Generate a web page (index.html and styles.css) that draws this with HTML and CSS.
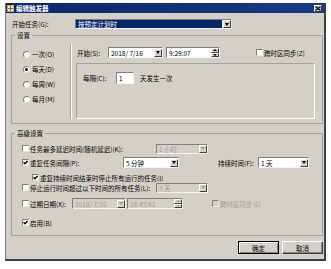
FILE: index.html
```html
<!DOCTYPE html>
<html lang="zh-CN">
<head>
  <meta charset="UTF-8">
  <title>编辑触发器</title>
  <link rel="stylesheet" href="styles.css">
</head>
<body>
  <div class="window">
    <div class="titlebar">
      <svg class="app-icon" width="7" height="7" viewBox="0 0 7 7">
        <rect x="0" y="0" width="7" height="7" fill="#f0a030"/>
        <rect x="1" y="1" width="5" height="5" fill="#fff3c0"/>
        <rect x="1" y="3" width="5" height="1" fill="#3a6cc8"/>
        <rect x="3" y="1" width="1" height="5" fill="#3a6cc8"/>
      </svg>
      <span class="title">编辑触发器</span>
      <span class="close-btn">
        <svg width="6" height="5" viewBox="0 0 6 5"><path d="M0.5 0.5 L5.5 4.5 M5.5 0.5 L0.5 4.5" stroke="#000" stroke-width="1.2"/></svg>
      </span>
    </div>

    <div class="content">
      <div class="task-row">
        <span class="task-label">开始任务(G):</span>
        <div class="combo combo-task">
          <span class="combo-selected">按预定计划时</span>
          <span class="drop-btn"></span>
        </div>
      </div>

      <fieldset class="group group-settings">
        <legend>设置</legend>
        <div class="schedule">
          <div class="freq-list">
            <div class="radio-item"><span class="radio"></span>一次(O)</div>
            <div class="radio-item"><span class="radio radio-on"></span>每天(D)</div>
            <div class="radio-item"><span class="radio"></span>每周(W)</div>
            <div class="radio-item"><span class="radio"></span>每月(M)</div>
          </div>
          <div class="divider"></div>
          <div class="schedule-detail">
            <div class="start-row">
              <span class="start-label">开始(S):</span>
              <div class="field date-field">2018/ 7/16<span class="drop-btn"></span></div>
              <div class="field time-field">9:29:07<span class="spin"><span class="spin-up"></span><span class="spin-down"></span></span></div>
              <div class="check-item tz-item"><span class="check"></span>跨时区同步(Z)</div>
            </div>
            <div class="recur-box">
              <span class="every-label">每隔(C):</span>
              <div class="field every-field">1</div>
              <span class="every-unit">天发生一次</span>
            </div>
          </div>
        </div>
      </fieldset>

      <fieldset class="group group-advanced">
        <legend>高级设置</legend>
        <div class="adv-row row-delay">
          <span class="check"></span>
          <span class="adv-label label-wide">任务最多延迟时间(随机延迟)(K):</span>
          <div class="combo combo-disabled combo-small">1 小时<span class="drop-btn"></span></div>
        </div>
        <div class="adv-row row-repeat">
          <span class="check check-on"></span>
          <span class="adv-label label-repeat">重复任务间隔(P):</span>
          <div class="combo combo-interval">5 分钟<span class="drop-btn"></span></div>
          <span class="duration-label">持续时间(F):</span>
          <div class="combo combo-duration">1 天<span class="drop-btn"></span></div>
        </div>
        <div class="adv-row row-stop-all">
          <span class="check check-on"></span>
          <span class="adv-label">重复持续时间结束时停止所有运行的任务(I)</span>
        </div>
        <div class="adv-row row-timeout">
          <span class="check"></span>
          <span class="adv-label label-wide">停止运行时间超过以下时间的所有任务(L):</span>
          <div class="combo combo-disabled combo-small">3 天<span class="drop-btn"></span></div>
        </div>
        <div class="adv-row row-expire">
          <span class="check"></span>
          <span class="adv-label label-expire">过期日期(X):</span>
          <div class="field field-disabled expire-date">2018/ 7/20<span class="drop-btn"></span></div>
          <div class="field field-disabled expire-time">14:45:41<span class="spin"><span class="spin-up"></span><span class="spin-down"></span></span></div>
          <div class="check-item check-disabled expire-tz"><span class="check"></span>跨时区同步(E)</div>
        </div>
        <div class="adv-row row-enable">
          <span class="check check-on"></span>
          <span class="adv-label">启用(B)</span>
        </div>
      </fieldset>

      <div class="buttons">
        <button class="btn btn-default">确定</button>
        <button class="btn">取消</button>
      </div>
    </div>
  </div>
</body>
</html>
```

FILE: styles.css
```css
* {
  box-sizing: border-box;
}

body {
  margin: 0;
  background: #fff;
  font-family: "Noto Sans CJK SC", "Noto Sans", sans-serif;
  font-size: 6.5px;
  line-height: 8px;
  color: #000;
}

.window {
  margin: 3px 0 0 5px;
  width: 321px;
  height: 258px;
  background: #d4d0c8;
  border-left: 1px solid #808080;
  border-right: 2px solid #404040;
  border-bottom: 2px solid #404040;
  display: flex;
  flex-direction: column;
}

/* title bar */
.titlebar {
  height: 10px;
  background: linear-gradient(90deg, #0a246a, #1c3a84);
  display: flex;
  align-items: center;
  padding: 0 2px 0 1px;
  color: #fff;
}

.app-icon {
  flex: none;
}

.title {
  margin-left: 2px;
  font-weight: bold;
}

.close-btn {
  margin-left: auto;
  width: 8px;
  height: 7px;
  background: #d4d0c8;
  border-top: 1px solid #fff;
  border-left: 1px solid #fff;
  border-right: 1px solid #404040;
  border-bottom: 1px solid #404040;
  display: flex;
  align-items: center;
  justify-content: center;
}

/* content */
.content {
  flex: 1;
  padding: 6px 1px 0 5px;
}

.task-row {
  display: flex;
  align-items: center;
  height: 10px;
}

.task-label {
  width: 64px;
  padding-left: 1px;
}

/* combo boxes and fields */
.combo,
.field {
  display: flex;
  align-items: center;
  background: #fff;
  border-top: 1px solid #808080;
  border-left: 1px solid #808080;
  border-right: 1px solid #f4f4f4;
  border-bottom: 1px solid #f4f4f4;
  padding-left: 2px;
  white-space: nowrap;
}

.combo-task {
  width: 157px;
  height: 10px;
  padding-left: 0;
}

.combo-selected {
  flex: 1;
  height: 8px;
  background: #0a246a;
  color: #fff;
  padding-left: 2px;
  margin-right: 1px;
}

.drop-btn {
  flex: none;
  margin-left: auto;
  width: 8px;
  height: 8px;
  background: #d4d0c8;
  border-top: 1px solid #fff;
  border-left: 1px solid #fff;
  border-right: 1px solid #404040;
  border-bottom: 1px solid #404040;
  display: flex;
  align-items: center;
  justify-content: center;
}

.drop-btn::after {
  content: "";
  border-top: 3px solid #000;
  border-left: 2.5px solid transparent;
  border-right: 2.5px solid transparent;
}

.spin {
  flex: none;
  margin-left: auto;
  width: 8px;
  height: 9px;
  display: flex;
  flex-direction: column;
}

.spin-up,
.spin-down {
  flex: 1;
  background: #d4d0c8;
  border-top: 1px solid #fff;
  border-left: 1px solid #fff;
  border-right: 1px solid #404040;
  border-bottom: 1px solid #404040;
  display: flex;
  align-items: center;
  justify-content: center;
}

.spin-up::after {
  content: "";
  border-bottom: 2px solid #000;
  border-left: 2px solid transparent;
  border-right: 2px solid transparent;
}

.spin-down::after {
  content: "";
  border-top: 2px solid #000;
  border-left: 2px solid transparent;
  border-right: 2px solid transparent;
}

.combo-disabled,
.field-disabled {
  background: #d4d0c8;
  color: #a09d96;
}

.combo-disabled .drop-btn::after,
.field-disabled .drop-btn::after,
.field-disabled .spin-up::after,
.field-disabled .spin-down::after {
  border-top-color: #a09d96;
  border-bottom-color: #a09d96;
}

/* group boxes */
.group {
  margin: 0;
  padding: 0;
  border: 1px solid #a6a39c;
  min-width: 0;
}

.group legend {
  margin-left: 3px;
  padding: 0 2px;
  line-height: 8px;
}

.group-settings {
  margin-top: 2px;
  padding: 5px 0 4px;
}

.schedule {
  display: flex;
  height: 75px;
}

.freq-list {
  width: 58px;
  padding: 6px 0 0 11px;
}

.radio-item,
.check-item {
  display: flex;
  align-items: center;
  height: 8px;
  white-space: nowrap;
}

.radio-item {
  margin-bottom: 7px;
}

.radio {
  width: 7px;
  height: 7px;
  margin-right: 2px;
  border-radius: 50%;
  background: #fff;
  border: 1px solid #808080;
  border-right-color: #e8e8e8;
  border-bottom-color: #e8e8e8;
  display: flex;
  align-items: center;
  justify-content: center;
}

.radio-on::after {
  content: "";
  width: 3px;
  height: 3px;
  border-radius: 50%;
  background: #000;
}

.check {
  flex: none;
  width: 7px;
  height: 7px;
  margin-right: 1px;
  background: #fff;
  border-top: 1px solid #808080;
  border-left: 1px solid #808080;
  border-right: 1px solid #e8e8e8;
  border-bottom: 1px solid #e8e8e8;
}

.check-on {
  background: #fff url("data:image/svg+xml;utf8,<svg xmlns='http://www.w3.org/2000/svg' width='5' height='5'><path d='M0.5 2.2 L2 3.7 L4.6 0.9' fill='none' stroke='black' stroke-width='1.3'/></svg>") no-repeat center;
}

.check-disabled {
  color: #a09d96;
}

.check-disabled .check {
  background: #d4d0c8;
}

.divider {
  width: 2px;
  border-left: 1px solid #a6a39c;
  border-right: 1px solid #fff;
}

.schedule-detail {
  margin-left: 4px;
  width: 239px;
}

.start-row {
  display: flex;
  align-items: center;
  margin-top: 3px;
  height: 11px;
}

.start-label {
  width: 32px;
  padding-left: 1px;
}

.date-field {
  width: 55px;
  height: 11px;
  margin-right: 3px;
}

.time-field {
  width: 54px;
  height: 11px;
}

.tz-item {
  margin-left: 36px;
}

.recur-box {
  margin-top: 5px;
  height: 56px;
  border-top: 1px solid #a6a39c;
  border-left: 1px solid #a6a39c;
  border-right: 1px solid #fff;
  border-bottom: 1px solid #fff;
  padding: 8px 0 0 6px;
  display: flex;
  align-items: flex-start;
}

.every-label {
  width: 33px;
  line-height: 12px;
}

.every-field {
  width: 18px;
  height: 12px;
}

.every-unit {
  margin-left: 6px;
  line-height: 12px;
}

/* advanced settings */
.group-advanced {
  margin-top: 5px;
  padding: 0 0 7px;
}

.adv-row {
  display: flex;
  align-items: center;
  height: 11px;
  padding-left: 10px;
  white-space: nowrap;
}

.row-delay {
  margin-top: 6px;
}

.row-repeat {
  margin-top: 3px;
}

.row-stop-all {
  margin-top: 5px;
  height: 9px;
  padding-left: 20px;
}

.row-expire {
  margin-top: 5px;
}

.row-enable {
  margin-top: 8px;
}

.label-wide {
  width: 126px;
}

.label-repeat {
  width: 93px;
}

.label-expire {
  width: 42px;
}

.combo-small {
  width: 52px;
  height: 10px;
}

.combo-interval {
  width: 56px;
  height: 11px;
}

.duration-label {
  margin-left: 39px;
  width: 40px;
}

.combo-duration {
  width: 51px;
  height: 11px;
}

.expire-date {
  width: 54px;
  height: 11px;
  margin-right: 1px;
}

.expire-time {
  width: 56px;
  height: 11px;
}

.expire-tz {
  margin-left: 29px;
}

/* buttons */
.buttons {
  display: flex;
  justify-content: flex-end;
  gap: 3px;
  margin-top: 5px;
}

.btn {
  width: 41px;
  height: 13px;
  padding: 0;
  font-family: inherit;
  font-size: 6.5px;
  line-height: 8px;
  color: #000;
  background: #d4d0c8;
  border-top: 1px solid #fff;
  border-left: 1px solid #fff;
  border-right: 1px solid #404040;
  border-bottom: 1px solid #404040;
  box-shadow: inset -1px -1px 0 #808080;
}

.btn-default {
  border: 1px solid #000;
  box-shadow: inset 1px 1px 0 #fff, inset -1px -1px 0 #808080;
}
```
